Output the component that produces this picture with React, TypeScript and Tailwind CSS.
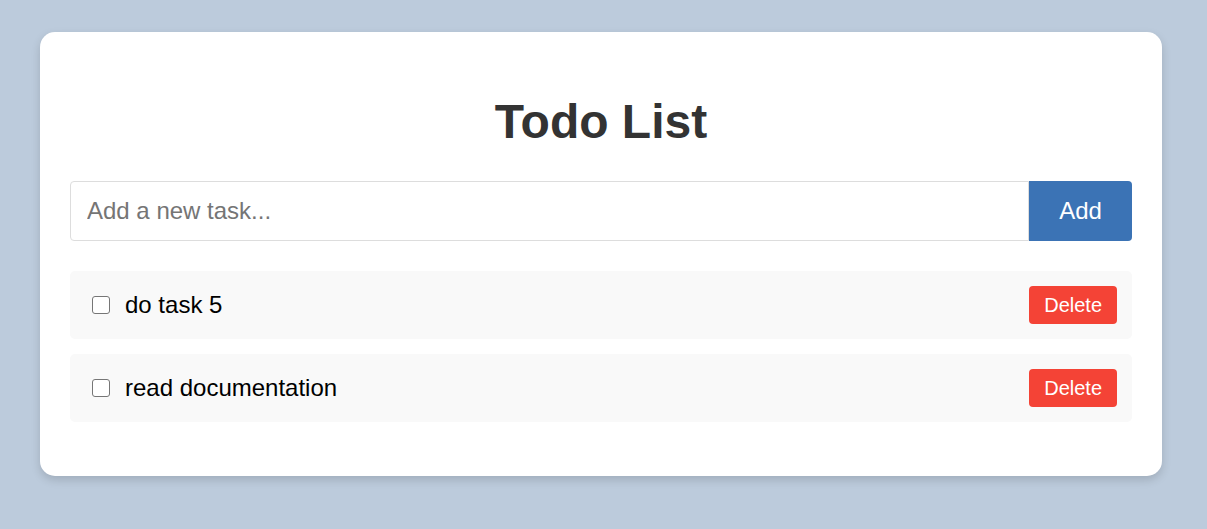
import React, { useState } from "react";

export default function App() {
  const [todos, setTodos] = useState([
    { id: 1, text: "do task 5", done: false },
    { id: 2, text: "read documentation", done: false },
  ]);
  const [value, setValue] = useState("");

  const add = () => {
    if (!value.trim()) return;
    setTodos([...todos, { id: Date.now(), text: value.trim(), done: false }]);
    setValue("");
  };

  return (
    <div
      className="min-h-screen w-full bg-[#bccbdc] pt-[32px] pl-[40px] overflow-hidden"
      style={{ fontFamily: '"Liberation Sans", Arial, sans-serif' }}
    >
      <div className="w-[1122px] bg-white rounded-[15px] shadow-[0_4px_10px_rgba(0,0,0,0.15)] px-[30px] pt-[30px] pb-[54px]">
        <h1 className="mt-[33px] mb-[32px] text-center text-[48px] leading-[54px] font-bold text-[#333333]">
          Todo List
        </h1>
        <div className="flex h-[60px]">
          <input
            className="flex-1 min-w-0 h-full border border-[#dddddd] rounded-l-[4px] px-[16px] text-[24px] text-black placeholder:text-[#757575] outline-none"
            placeholder="Add a new task..."
            value={value}
            onChange={(e) => setValue(e.target.value)}
            onKeyDown={(e) => e.key === "Enter" && add()}
          />
          <button
            onClick={add}
            className="w-[103px] h-full bg-[#3b73b5] text-white text-[24px] rounded-r-[4px]"
          >
            Add
          </button>
        </div>
        <ul className="mt-[30px] flex flex-col gap-[15px]">
          {todos.map((t) => (
            <li
              key={t.id}
              className="h-[68px] bg-[#f9f9f9] rounded-[5px] flex items-center pl-[22px] pr-[15px]"
            >
              <input
                type="checkbox"
                checked={t.done}
                onChange={() =>
                  setTodos(todos.map((x) => (x.id === t.id ? { ...x, done: !x.done } : x)))
                }
                className="appearance-none w-[18px] h-[18px] m-0 bg-white border-[1.5px] border-[#767676] rounded-[3px] checked:bg-[#3b73b5] checked:border-[#3b73b5]"
              />
              <span
                className={`ml-[15px] flex-1 text-[24px] text-black ${t.done ? "line-through text-gray-500" : ""}`}
              >
                {t.text}
              </span>
              <button
                onClick={() => setTodos(todos.filter((x) => x.id !== t.id))}
                className="h-[38px] px-[15px] bg-[#f44336] text-white text-[20px] rounded-[4px]"
              >
                Delete
              </button>
            </li>
          ))}
        </ul>
      </div>
    </div>
  );
}
